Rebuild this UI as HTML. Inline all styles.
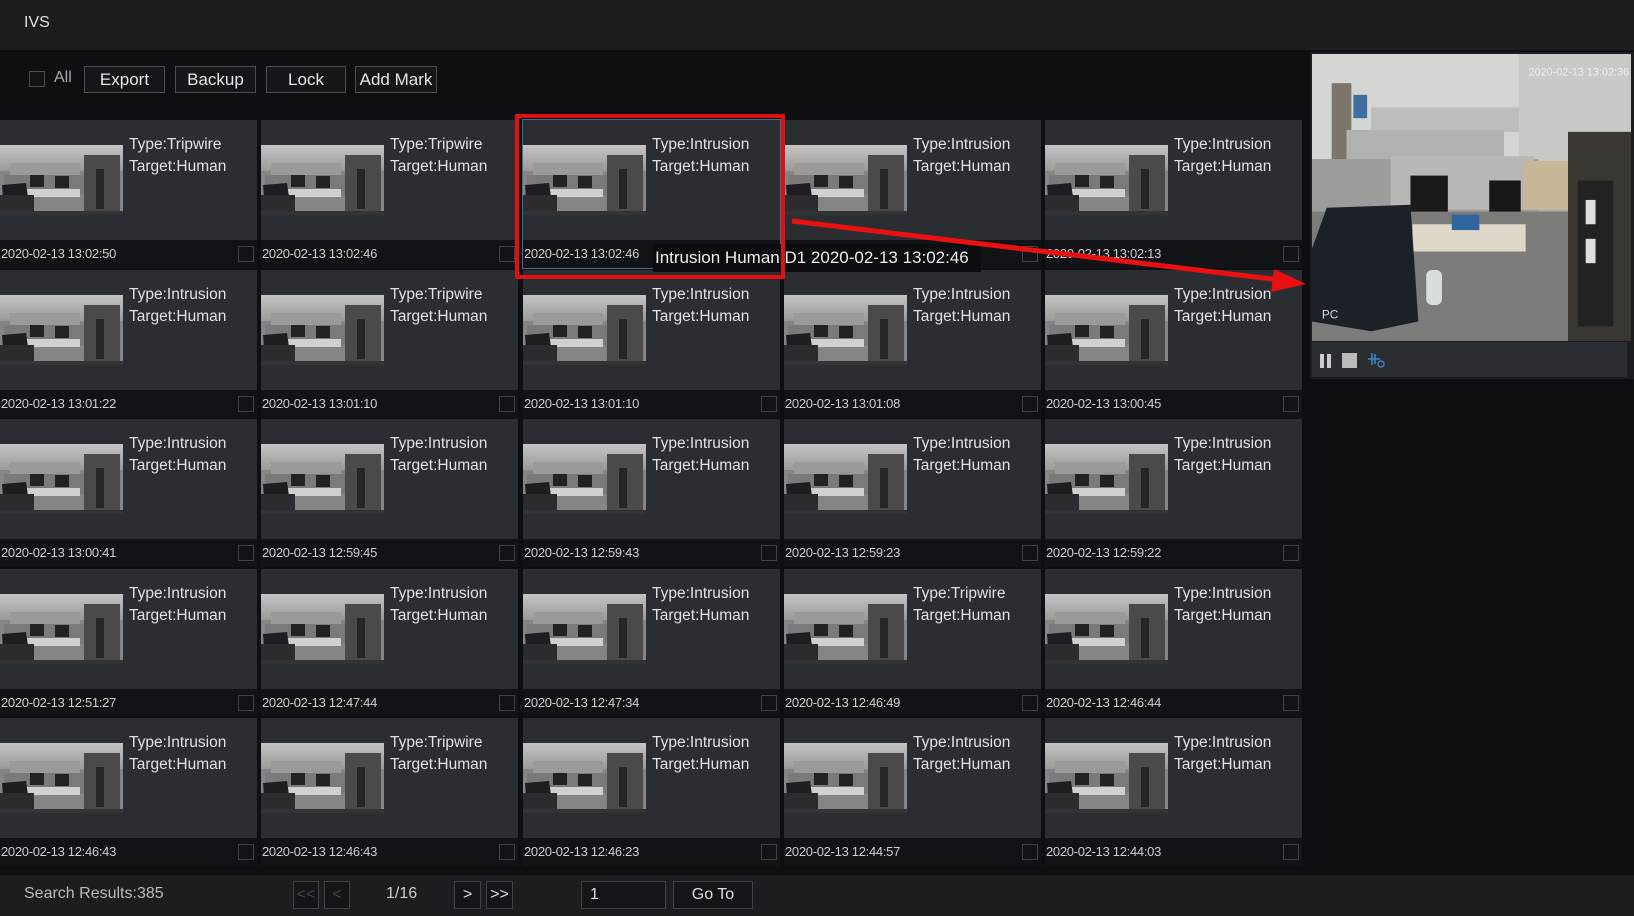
<!DOCTYPE html>
<html><head><meta charset="utf-8"><style>
*{margin:0;padding:0;box-sizing:border-box}
body{width:1634px;height:916px;background:#0e0f12;font-family:"Liberation Sans","DejaVu Sans",sans-serif;color:#d8d8d8;position:relative;overflow:hidden}
.top{position:absolute;left:0;top:0;width:1634px;height:50px;background:#1b1d21}
.top span{position:absolute;left:24px;top:14px;font-size:16px;color:#e0e0e0}
.cb{position:absolute;width:16px;height:16px;border:1px solid #4a4d52;background:#111315}
.btn{position:absolute;height:27px;border:1px solid #4a4d52;background:#141619;color:#e6e6e6;font-size:17px;text-align:center;line-height:25px}
.cell{position:absolute;width:257px;height:146px;background:#2a2d32}
.cell .th{position:absolute;left:0;top:25px;width:123px;height:70px}
.cell .t{position:absolute;left:129px;top:14px;font-size:15.5px;line-height:22px;color:#e2e2e2}
.cell .d{position:absolute;left:0;top:120px;width:257px;height:28px;background:#111316}
.cell .d span{position:absolute;left:1px;top:6px;font-size:13px;color:#cfcfcf;letter-spacing:-0.3px}
.cell .d i{position:absolute;right:3px;top:6px;width:16px;height:16px;border:1px solid #3e4146}
.bot{position:absolute;left:0;top:875px;width:1634px;height:41px;background:#1b1d21}
.pb{position:absolute;top:6px;height:28px;border:1px solid #3e4146;background:#131518;color:#ddd;text-align:center;line-height:26px;font-size:16px}
</style></head><body>
<svg width="0" height="0" style="position:absolute"><defs>
<linearGradient id="g" x1="0" y1="0" x2="0" y2="1"><stop offset="0" stop-color="#c4c4c4"/><stop offset="1" stop-color="#9a9a9a"/></linearGradient>
<symbol id="sc" viewBox="0 0 123 70">
<rect width="123" height="70" fill="#858585"/>
<rect width="123" height="26" fill="url(#g)"/>
<rect x="10" y="18" width="70" height="22" fill="#9a9a9a"/>
<rect x="4" y="30" width="80" height="20" fill="#7a7a7a"/>
<rect x="30" y="30" width="14" height="12" fill="#222"/>
<rect x="55" y="31" width="14" height="12" fill="#222"/>
<rect x="25" y="44" width="55" height="8" fill="#d0d0d0"/>
<path d="M2 40 L26 38 L30 66 L4 68 Z" fill="#1e1e22"/>
<rect x="0" y="50" width="34" height="16" fill="#2b2b30"/>
<rect x="84" y="10" width="36" height="60" fill="#4a4a4a"/>
<rect x="96" y="24" width="8" height="40" fill="#262626"/>
<rect x="0" y="66" width="123" height="4" fill="#333"/>
</symbol>
</defs></svg>

<div class="top"><span>IVS</span></div>
<div class="cb" style="left:29px;top:71px"></div>
<div style="position:absolute;left:54px;top:69px;font-size:16px;color:#aaa">All</div>
<div class="btn" style="left:84px;top:66px;width:81px">Export</div>
<div class="btn" style="left:175px;top:66px;width:81px">Backup</div>
<div class="btn" style="left:266px;top:66px;width:80px">Lock</div>
<div class="btn" style="left:355px;top:66px;width:82px">Add Mark</div>

<div class="cell" style="left:0;top:120px"><svg class="th"><use href="#sc"/></svg><div class="t">Type:Tripwire<br>Target:Human</div><div class="d"><span>2020-02-13 13:02:50</span><i></i></div></div>
<div class="cell" style="left:261px;top:120px"><svg class="th"><use href="#sc"/></svg><div class="t">Type:Tripwire<br>Target:Human</div><div class="d"><span>2020-02-13 13:02:46</span><i></i></div></div>
<div class="cell" style="left:523px;top:120px"><svg class="th"><use href="#sc"/></svg><div class="t">Type:Intrusion<br>Target:Human</div><div class="d"><span>2020-02-13 13:02:46</span><i></i></div></div>
<div class="cell" style="left:784px;top:120px"><svg class="th"><use href="#sc"/></svg><div class="t">Type:Intrusion<br>Target:Human</div><div class="d"><span>2020-02-13 13:02:20</span><i></i></div></div>
<div class="cell" style="left:1045px;top:120px"><svg class="th"><use href="#sc"/></svg><div class="t">Type:Intrusion<br>Target:Human</div><div class="d"><span>2020-02-13 13:02:13</span><i></i></div></div>
<div class="cell" style="left:0;top:270px"><svg class="th"><use href="#sc"/></svg><div class="t">Type:Intrusion<br>Target:Human</div><div class="d"><span>2020-02-13 13:01:22</span><i></i></div></div>
<div class="cell" style="left:261px;top:270px"><svg class="th"><use href="#sc"/></svg><div class="t">Type:Tripwire<br>Target:Human</div><div class="d"><span>2020-02-13 13:01:10</span><i></i></div></div>
<div class="cell" style="left:523px;top:270px"><svg class="th"><use href="#sc"/></svg><div class="t">Type:Intrusion<br>Target:Human</div><div class="d"><span>2020-02-13 13:01:10</span><i></i></div></div>
<div class="cell" style="left:784px;top:270px"><svg class="th"><use href="#sc"/></svg><div class="t">Type:Intrusion<br>Target:Human</div><div class="d"><span>2020-02-13 13:01:08</span><i></i></div></div>
<div class="cell" style="left:1045px;top:270px"><svg class="th"><use href="#sc"/></svg><div class="t">Type:Intrusion<br>Target:Human</div><div class="d"><span>2020-02-13 13:00:45</span><i></i></div></div>
<div class="cell" style="left:0;top:419px"><svg class="th"><use href="#sc"/></svg><div class="t">Type:Intrusion<br>Target:Human</div><div class="d"><span>2020-02-13 13:00:41</span><i></i></div></div>
<div class="cell" style="left:261px;top:419px"><svg class="th"><use href="#sc"/></svg><div class="t">Type:Intrusion<br>Target:Human</div><div class="d"><span>2020-02-13 12:59:45</span><i></i></div></div>
<div class="cell" style="left:523px;top:419px"><svg class="th"><use href="#sc"/></svg><div class="t">Type:Intrusion<br>Target:Human</div><div class="d"><span>2020-02-13 12:59:43</span><i></i></div></div>
<div class="cell" style="left:784px;top:419px"><svg class="th"><use href="#sc"/></svg><div class="t">Type:Intrusion<br>Target:Human</div><div class="d"><span>2020-02-13 12:59:23</span><i></i></div></div>
<div class="cell" style="left:1045px;top:419px"><svg class="th"><use href="#sc"/></svg><div class="t">Type:Intrusion<br>Target:Human</div><div class="d"><span>2020-02-13 12:59:22</span><i></i></div></div>
<div class="cell" style="left:0;top:569px"><svg class="th"><use href="#sc"/></svg><div class="t">Type:Intrusion<br>Target:Human</div><div class="d"><span>2020-02-13 12:51:27</span><i></i></div></div>
<div class="cell" style="left:261px;top:569px"><svg class="th"><use href="#sc"/></svg><div class="t">Type:Intrusion<br>Target:Human</div><div class="d"><span>2020-02-13 12:47:44</span><i></i></div></div>
<div class="cell" style="left:523px;top:569px"><svg class="th"><use href="#sc"/></svg><div class="t">Type:Intrusion<br>Target:Human</div><div class="d"><span>2020-02-13 12:47:34</span><i></i></div></div>
<div class="cell" style="left:784px;top:569px"><svg class="th"><use href="#sc"/></svg><div class="t">Type:Tripwire<br>Target:Human</div><div class="d"><span>2020-02-13 12:46:49</span><i></i></div></div>
<div class="cell" style="left:1045px;top:569px"><svg class="th"><use href="#sc"/></svg><div class="t">Type:Intrusion<br>Target:Human</div><div class="d"><span>2020-02-13 12:46:44</span><i></i></div></div>
<div class="cell" style="left:0;top:718px"><svg class="th"><use href="#sc"/></svg><div class="t">Type:Intrusion<br>Target:Human</div><div class="d"><span>2020-02-13 12:46:43</span><i></i></div></div>
<div class="cell" style="left:261px;top:718px"><svg class="th"><use href="#sc"/></svg><div class="t">Type:Tripwire<br>Target:Human</div><div class="d"><span>2020-02-13 12:46:43</span><i></i></div></div>
<div class="cell" style="left:523px;top:718px"><svg class="th"><use href="#sc"/></svg><div class="t">Type:Intrusion<br>Target:Human</div><div class="d"><span>2020-02-13 12:46:23</span><i></i></div></div>
<div class="cell" style="left:784px;top:718px"><svg class="th"><use href="#sc"/></svg><div class="t">Type:Intrusion<br>Target:Human</div><div class="d"><span>2020-02-13 12:44:57</span><i></i></div></div>
<div class="cell" style="left:1045px;top:718px"><svg class="th"><use href="#sc"/></svg><div class="t">Type:Intrusion<br>Target:Human</div><div class="d"><span>2020-02-13 12:44:03</span><i></i></div></div>

<div style="position:absolute;left:522px;top:119px;width:259px;height:150px;border:1px solid #4b6a8a"></div>
<div style="position:absolute;left:653px;top:244px;width:328px;height:28px;background:#0c0d0f;color:#eee;font-size:17px;line-height:28px;padding-left:2px;white-space:nowrap">Intrusion Human D1 2020-02-13 13:02:46</div>
<div style="position:absolute;left:515px;top:114px;width:270px;height:165px;border:4px solid #e01010"></div>
<svg style="position:absolute;left:0;top:0" width="1634" height="916">
<line x1="792" y1="221" x2="1280" y2="280" stroke="#e81010" stroke-width="5"/>
<polygon points="1306,284 1274,269 1271,292" fill="#e81010"/>
</svg>

<div style="position:absolute;left:1310px;top:52px;width:324px;height:327px;background:#1b1d21"></div>
<svg style="position:absolute;left:1312px;top:54px" width="319" height="287" viewBox="0 0 324 295" preserveAspectRatio="none">
<rect width="324" height="295" fill="#a7a7a4"/>
<rect width="324" height="110" fill="#d4d6d4"/>
<rect x="210" y="0" width="114" height="160" fill="#c8cac8"/>
<rect x="20" y="30" width="20" height="80" fill="#7c766a"/>
<rect x="42" y="42" width="14" height="24" fill="#3f6fa0"/>
<rect x="60" y="55" width="150" height="25" fill="#bdbebc"/>
<rect x="35" y="78" width="160" height="32" fill="#b0b2b0"/>
<rect x="0" y="108" width="230" height="60" fill="#9c9d9b"/>
<rect x="80" y="105" width="145" height="55" fill="#b8b9b6"/>
<rect x="100" y="125" width="38" height="40" fill="#1a1a1a"/>
<rect x="180" y="130" width="32" height="38" fill="#181818"/>
<rect x="0" y="162" width="324" height="133" fill="#7c7d7b"/>
<rect x="102" y="175" width="115" height="28" fill="#ddd8c8"/>
<rect x="142" y="165" width="28" height="16" fill="#3264a0"/>
<path d="M0 200 L15 158 L100 155 L108 275 L60 285 L0 275Z" fill="#1c2128"/>
<rect x="116" y="222" width="16" height="36" rx="6" fill="#d8dde0"/>
<rect x="260" y="80" width="64" height="215" fill="#3a3632"/>
<rect x="270" y="130" width="36" height="150" fill="#222"/>
<rect x="278" y="150" width="10" height="25" fill="#ddd"/>
<rect x="278" y="190" width="10" height="25" fill="#ddd"/>
<rect x="215" y="110" width="45" height="50" fill="#c8b898"/>
<text x="220" y="22" font-size="11" fill="#eee" font-family="Liberation Sans">2020-02-13 13:02:36</text>
<text x="10" y="272" font-size="12" fill="#ddd" font-family="Liberation Sans">PC</text>
</svg>
<div style="position:absolute;left:1312px;top:342px;width:315px;height:35px;background:#2a2d32"></div>
<div style="position:absolute;left:1320px;top:354px;width:4px;height:14px;background:#ccc"></div>
<div style="position:absolute;left:1327px;top:354px;width:4px;height:14px;background:#ccc"></div>
<div style="position:absolute;left:1342px;top:353px;width:15px;height:15px;background:#bbb"></div>
<svg style="position:absolute;left:1366px;top:351px" width="20" height="18"><path d="M2 8 H14 M6 2 V14 M9 3 V13" stroke="#3a86c8" stroke-width="1.6" fill="none"/><circle cx="15" cy="13" r="3" stroke="#3a86c8" stroke-width="1.4" fill="none"/></svg>

<div class="bot">
<div style="position:absolute;left:24px;top:10px;font-size:16px;color:#bbb">Search Results:385</div>
<div class="pb" style="left:293px;width:26px;color:#444">&lt;&lt;</div>
<div class="pb" style="left:324px;width:26px;color:#444">&lt;</div>
<div style="position:absolute;left:386px;top:10px;font-size:16px;color:#ccc">1/16</div>
<div class="pb" style="left:454px;width:27px">&gt;</div>
<div class="pb" style="left:486px;width:27px">&gt;&gt;</div>
<div class="pb" style="left:581px;width:85px;text-align:left;padding-left:8px">1</div>
<div class="pb" style="left:673px;width:80px">Go To</div>
</div>
</body></html>
